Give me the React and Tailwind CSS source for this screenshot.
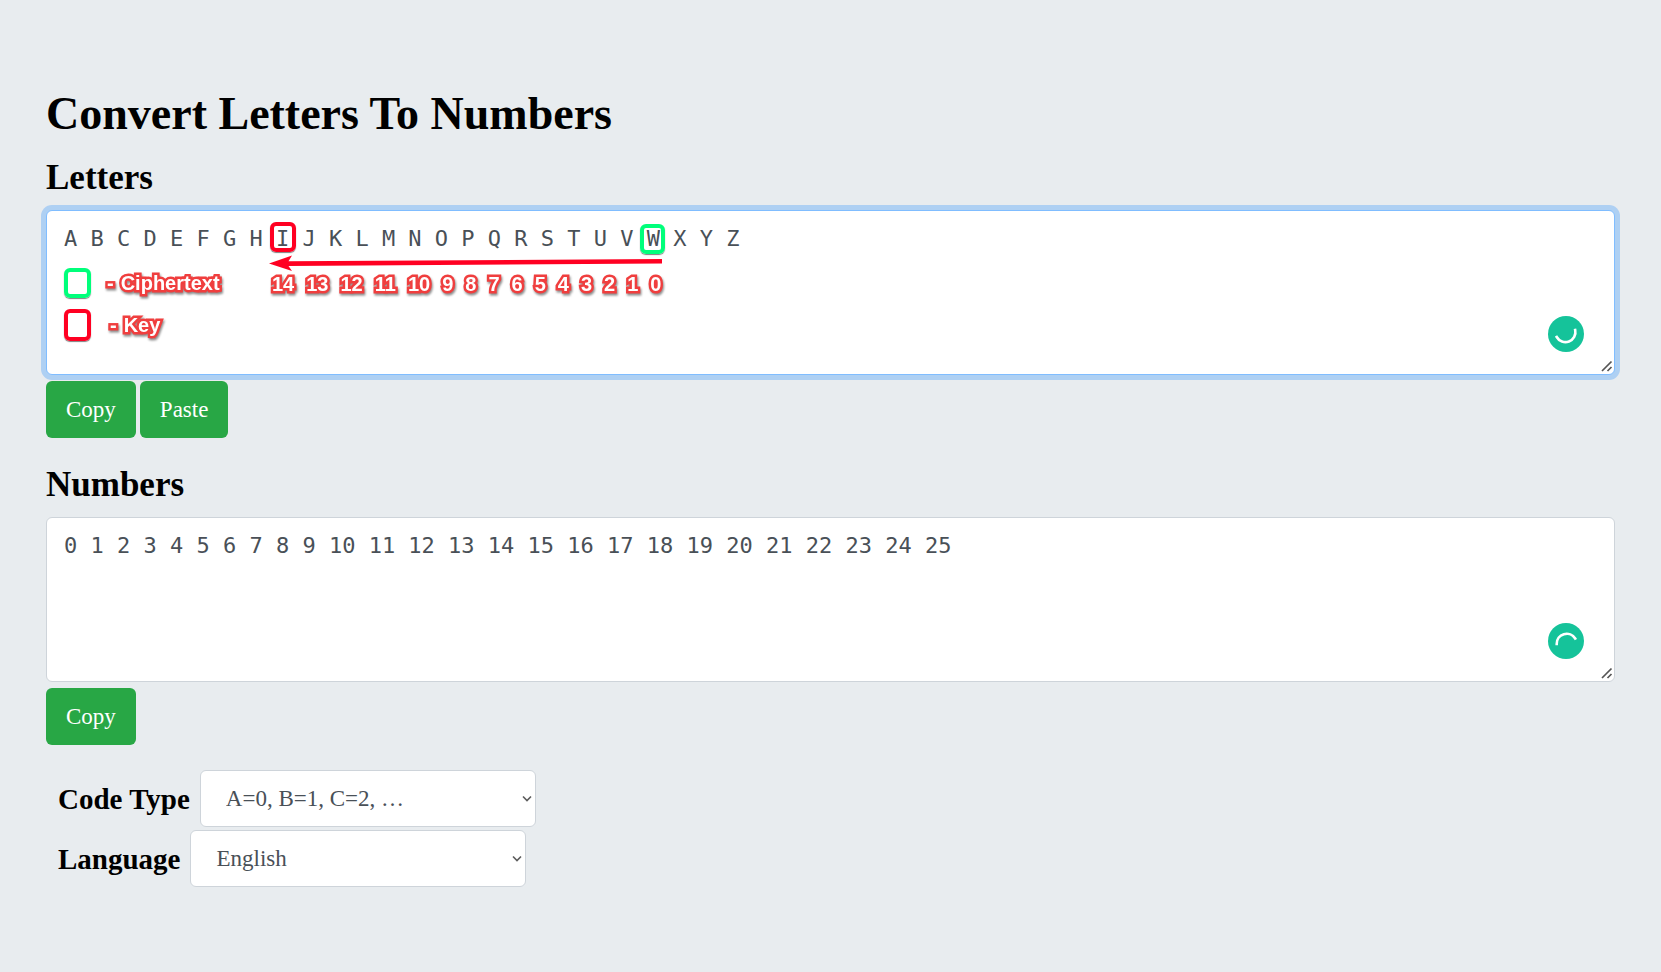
import React from "react";

const LETTERS = "A B C D E F G H I J K L M N O P Q R S T U V W X Y Z";
const NUMBERS = Array.from({ length: 26 }, (_, i) => i).join(" ");
const STEPS = Array.from({ length: 15 }, (_, i) => 14 - i);

const outlined =
  "font-['Liberation_Sans',sans-serif] text-xl leading-6 font-bold text-white whitespace-nowrap [-webkit-text-stroke:5px_#f03e3e] [paint-order:stroke_fill] [stroke-linejoin:round] drop-shadow-[1px_2px_1px_rgba(0,0,0,0.45)]";

function Spinner({ arc }) {
  return (
    <svg
      className="pointer-events-none absolute right-[31px] bottom-[23px] size-9"
      viewBox="0 0 36 36"
      aria-hidden="true"
    >
      <circle cx="18" cy="18" r="18" fill="#15c39a" />
      <path d={arc} fill="none" stroke="#fff" strokeWidth="2.6" strokeLinecap="square" />
    </svg>
  );
}

function Grip() {
  return (
    <svg
      className="pointer-events-none absolute right-[2px] bottom-[3px] h-3 w-3"
      viewBox="0 0 12 12"
      aria-hidden="true"
    >
      <path d="M1 11 L10.500 1.500 M6.500 11 L10.500 7" fill="none" stroke="#555" strokeWidth="1.700" />
    </svg>
  );
}

function Button({ children }) {
  return (
    <button
      type="button"
      className="h-[57px] rounded-md bg-[#28a745] px-5 text-[23px] leading-9 text-white"
    >
      {children}
    </button>
  );
}

function Field({ id, label, value, focused, arc, children }) {
  return (
    <>
      <label htmlFor={id} className="block text-[35px] leading-10 font-bold">
        {label}
      </label>
      <div className="relative mt-3">
        <textarea
          id={id}
          rows={4}
          defaultValue={value}
          spellCheck={false}
          className={
            "block w-full resize rounded-md border bg-white px-[17px] pt-[10px] pb-[9px] font-['DejaVu_Sans_Mono',monospace] text-[22px] leading-9 text-[#495057] outline-none [&::-webkit-resizer]:bg-transparent " +
            (focused
              ? "border-[#80bdff] shadow-[0_0_0_5px_rgba(0,123,255,0.25)]"
              : "border-[#ced4da]")
          }
        />
        {children}
        <Spinner arc={arc} />
        <Grip />
      </div>
    </>
  );
}

function Annotations() {
  return (
    <div className="pointer-events-none absolute inset-0">
      <div className="absolute top-3 left-[224px] h-[30px] w-[26px] rounded-md border-4 border-[#ff0022] shadow-[0_1px_1px_rgba(0,0,0,0.5)]" />
      <div className="absolute top-[14px] left-[594px] h-[30px] w-[25px] rounded-md border-4 border-[#00ff7b] shadow-[0_1px_1px_rgba(0,0,0,0.5)]" />
      <svg
        className="absolute top-[43px] left-[222px] h-[20px] w-[396px]"
        viewBox="0 0 396 20"
        aria-hidden="true"
      >
        <path d="M1 10.500 L24 2.500 L20.500 8.300 L394 6 V10.500 L20.500 13 L24 18 Z" fill="#ff0022" />
      </svg>
      <div className={"absolute top-[62px] left-[226px] flex gap-3 " + outlined}>
        {STEPS.map((n) => (
          <span key={n}>{n}</span>
        ))}
      </div>
      <div className="absolute top-[58px] left-[18px] h-[30px] w-[27px] rounded-md border-4 border-[#00ff7b] shadow-[0_1px_1px_rgba(0,0,0,0.5)]" />
      <div className={"absolute top-[61px] left-[61px] flex gap-[7px] " + outlined}>
        <span>-</span>
        <span>Ciphertext</span>
      </div>
      <div className="absolute top-[99px] left-[18px] h-[32px] w-[27px] rounded-md border-4 border-[#ff0022] shadow-[0_1px_1px_rgba(0,0,0,0.5)]" />
      <div className={"absolute top-[103px] left-[64px] flex gap-[7px] " + outlined}>
        <span>-</span>
        <span>Key</span>
      </div>
    </div>
  );
}

function Select({ id, label, options }) {
  return (
    <div className="flex items-center gap-[10px]">
      <label htmlFor={id} className="text-[29px] leading-9 font-bold">
        {label}
      </label>
      <div className="relative">
        <select
          id={id}
          className="block h-[57px] w-[336px] appearance-none rounded-md border border-[#ced4da] bg-white px-[25px] text-[23px] leading-9 text-[#495057]"
        >
          {options.map((o) => (
            <option key={o}>{o}</option>
          ))}
        </select>
        <svg
          className="pointer-events-none absolute top-[25px] right-1 h-[7px] w-[10px]"
          viewBox="0 0 10 7"
          aria-hidden="true"
        >
          <path d="M1 1.500 L5 5.500 L9 1.500" fill="none" stroke="#5c5c5c" strokeWidth="1.600" />
        </svg>
      </div>
    </div>
  );
}

export default function App() {
  return (
    <main className="min-h-screen bg-[#e8ecef] px-[46px] pt-[86px] pb-20 font-['Liberation_Serif',serif] text-black">
      <h1 className="text-[46px] leading-[56px] font-bold">Convert Letters To Numbers</h1>

      <section className="mt-4">
        <Field
          id="letters"
          label="Letters"
          value={LETTERS}
          focused
          arc="M8.700 21 A10 10 0 0 0 27.200 14"
        >
          <Annotations />
        </Field>
        <div className="mt-[6px] flex gap-1">
          <Button>Copy</Button>
          <Button>Paste</Button>
        </div>
      </section>

      <section className="mt-[27px]">
        <Field
          id="numbers"
          label="Numbers"
          value={NUMBERS}
          arc="M8.700 21 A10 10 0 0 1 27.200 15.500"
        />
        <div className="mt-[6px] flex">
          <Button>Copy</Button>
        </div>
      </section>

      <div className="mt-[25px] flex flex-col gap-[3px] pl-3">
        <Select
          id="code-type"
          label="Code Type"
          options={["A=0, B=1, C=2, …", "A=1, B=2, C=3, …"]}
        />
        <Select id="language" label="Language" options={["English"]} />
      </div>
    </main>
  );
}
